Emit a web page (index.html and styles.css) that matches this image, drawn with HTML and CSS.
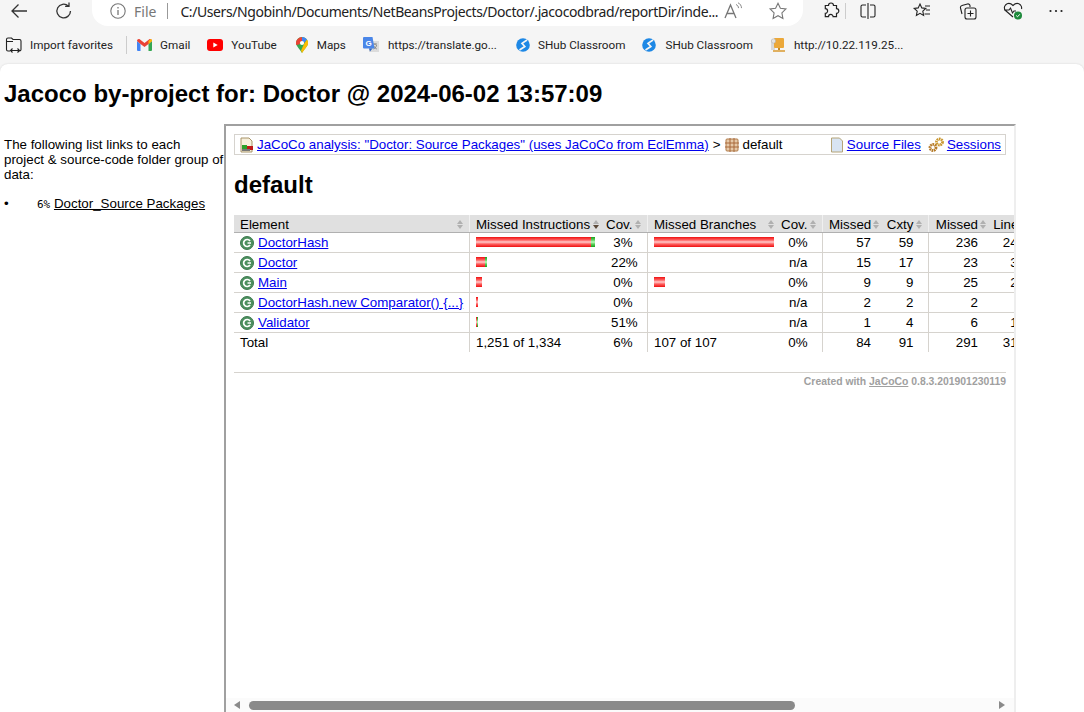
FILE: index.html
```html
<!DOCTYPE html>
<html lang="en">
<head>
    <meta charset="UTF-8">
    <title>Jacoco by-project for: Doctor</title>
    <link rel="stylesheet" href="styles.css">
</head>
<body>

<div class="toolbar">
    <svg class="tool-back" width="20" height="20" viewBox="0 0 20 20"><path d="M18 10H3M9.5 3.5 3 10l6.5 6.5" fill="none" stroke="#333" stroke-width="1.3"/></svg>
    <svg class="tool-reload" width="20" height="20" viewBox="0 0 20 20"><path d="M16.5 10a6.8 6.8 0 1 1-2.2-5M15 1.5V5.4h-3.9" fill="none" stroke="#333" stroke-width="1.3"/></svg>
    <div class="address">
        <svg width="18" height="18" viewBox="0 0 18 18"><circle cx="9" cy="9" r="7.2" fill="none" stroke="#777" stroke-width="1.1"/><path d="M9 8v5M9 5v1.4" stroke="#777" stroke-width="1.3"/></svg>
        <span class="addr-file">File</span>
        <span class="addr-sep"></span>
        <span class="addr-url">C:/Users/Ngobinh/Documents/NetBeansProjects/Doctor/.jacocodbrad/reportDir/inde...</span>
        <svg class="addr-read" width="20" height="20" viewBox="0 0 20 20"><path d="M2 17 7.5 4 13 17M4 12.5h7" fill="none" stroke="#777" stroke-width="1.3"/><path d="M13 3.5c1.5.6 2.5 2 2.5 3.6M15 1.8c2.2.9 3.5 3 3.5 5.3" fill="none" stroke="#888"/></svg>
        <svg class="addr-star" width="20" height="20" viewBox="0 0 20 20"><path d="m10 2.2 2.4 5.1 5.5.7-4 3.9 1 5.500-4.900-2.700-4.900 2.700 1-5.500-4-3.900 5.500-.7z" fill="none" stroke="#777" stroke-width="1.1"/></svg>
    </div>
    <div class="tool-right">
        <svg width="18" height="18" viewBox="0 0 18 18"><path d="M6.500 3.500a2.500 2.500 0 0 1 5 0h3v3.200a2.300 2.300 0 0 1 0 4.600v3.400h-3.400a2.300 2.300 0 0 0-4.600 0H3.300v-3.400a2.300 2.300 0 0 0 0-4.600V3.500z" fill="none" stroke="#222" stroke-width="1.2"/></svg>
        <span class="tool-sep"></span>
        <svg class="tool-split" width="18" height="18" viewBox="0 0 18 18"><path d="M7 3H3.500A1.500 1.500 0 0 0 2 4.500v9A1.500 1.500 0 0 0 3.500 15H7M11 3h3.500A1.500 1.500 0 0 1 16 4.500v9a1.500 1.500 0 0 1-1.500 1.500H11M9 1v16" fill="none" stroke="#222" stroke-width="1.1"/></svg>
        <svg class="tool-fav" width="20" height="20" viewBox="0 0 20 20"><path d="m8 3 1.800 3.900 4 .5-3 2.800.8 4.200L8 12.300l-3.600 2.100.8-4.200-3-2.800 4-.5zM13 5h5M14 9h4M12.500 13H18" fill="none" stroke="#222" stroke-width="1.1"/></svg>
        <svg class="tool-coll" width="20" height="20" viewBox="0 0 20 20"><path d="M4 13 2.500 7A2 2 0 0 1 4 4.500L9.500 3a2 2 0 0 1 2.500 1.500V6" fill="none" stroke="#222" stroke-width="1.1"/><rect x="7" y="7" width="11" height="11" rx="2" fill="none" stroke="#222" stroke-width="1.1"/><path d="M12.500 9.500v6M9.500 12.500h6" stroke="#222" stroke-width="1.1"/></svg>
        <svg class="tool-heart" width="22" height="20" viewBox="0 0 22 20"><path d="M11 16 3.500 9.500a4.300 4.300 0 0 1 0-5.500c2-2 5-2 7.500.5 2.500-2.500 5.500-2.500 7.500-.5a4.300 4.300 0 0 1 1 4M2 9h5l1.500-2 2 5 1.500-2h2" fill="none" stroke="#222" stroke-width="1.1"/><circle cx="16" cy="14.500" r="4" fill="#1e8a3c"/><path d="m14.200 14.500 1.300 1.300 2.300-2.500" fill="none" stroke="#fff"/></svg>
        <svg class="tool-dots" width="18" height="18" viewBox="0 0 18 18"><circle cx="3.500" cy="9" r="1.100" fill="#222"/><circle cx="9" cy="9" r="1.100" fill="#222"/><circle cx="14.500" cy="9" r="1.100" fill="#222"/></svg>
    </div>
</div>

<div class="bookmarks">
    <div class="bm bm-import">
        <svg width="18" height="18" viewBox="0 0 18 18"><path d="M5 15H3a1.500 1.500 0 0 1-1.500-1.500v-10A1.500 1.500 0 0 1 3 2h3.500L8 3.500h6.500A1.500 1.500 0 0 1 16 5v8.500a1.500 1.500 0 0 1-1.500 1.500M1.500 5.500H8M6 14.500h8M7.500 12.500l-2 2 2 2M12.500 12.500l2 2-2 2" fill="none" stroke="#222" stroke-width="1.1"/></svg>
        <span>Import favorites</span>
    </div>
    <span class="bm-sep"></span>
    <div class="bm">
        <svg width="15" height="12" viewBox="0 0 15 12"><path d="M0 2v9a1 1 0 0 0 1 1h2.500V5z" fill="#4285f4"/><path d="M15 2v9a1 1 0 0 1-1 1h-2.500V5z" fill="#34a853"/><path d="M0 2c0-1.800 1.800-2.500 3-1.500L7.500 4 12 .5c1.200-1 3-.3 3 1.500l-3.500 3-4 3-4-3z" fill="#ea4335"/><path d="M11.500 5 15 2c0-1-.5-1.600-1.200-1.900L11.500 2z" fill="#fbbc04"/></svg>
        <span>Gmail</span>
    </div>
    <div class="bm bm-wide">
        <svg width="16" height="12" viewBox="0 0 16 12"><rect width="16" height="12" rx="3" fill="#f00"/><path d="m6.300 3.500 4.400 2.500-4.400 2.500z" fill="#fff"/></svg>
        <span>YouTube</span>
    </div>
    <div class="bm bm-loose">
        <svg width="12" height="16" viewBox="0 0 12 16"><path d="M6 0a6 6 0 0 1 6 6c0 3-3.500 5.500-6 10C3.500 11.500 0 9 0 6a6 6 0 0 1 6-6z" fill="#34a853"/><path d="M1 2.800A6 6 0 0 1 6 0v4L3 7.500.3 8A6 6 0 0 1 1 2.800z" fill="#ea4335"/><path d="M6 0a6 6 0 0 1 5 2.600L8 6 6 4z" fill="#4285f4"/><path d="M11 2.600A6 6 0 0 1 11.500 8.500L6 16l-1-2.500L8.500 6z" fill="#fbbc04"/><circle cx="6" cy="6" r="2.100" fill="#fff"/></svg>
        <span>Maps</span>
    </div>
    <div class="bm bm-wide bm-loose">
        <svg width="16" height="16" viewBox="0 0 16 16"><rect x="6" y="4" width="10" height="11" fill="#dcdcdc"/><path d="M10 7h4M12 6.500V8M10.500 12c2-1 3-2.500 3-4M10.800 9c.6 1.400 1.600 2.400 3 3" fill="none" stroke="#777" stroke-width=".8"/><path d="M1 0h8.500l2 11.500H1a1 1 0 0 1-1-1V1a1 1 0 0 1 1-1z" fill="#4a86e8"/><text x="2.500" y="9" class="bm-g">G</text><path d="m6 11.500 1 3 2.500-3z" fill="#3367c0"/></svg>
        <span>https://translate.go...</span>
    </div>
    <div class="bm">
        <svg width="14" height="16" viewBox="0 0 14 16"><circle cx="7" cy="8" r="6.800" fill="#1e88e5"/><path d="M11 3 6 6.300 8.800 9.500 3.500 13" fill="none" stroke="#f5f5f5" stroke-width="1.7"/></svg>
        <span>SHub Classroom</span>
    </div>
    <div class="bm bm-loose">
        <svg width="14" height="16" viewBox="0 0 14 16"><circle cx="7" cy="8" r="6.800" fill="#1e88e5"/><path d="M11 3 6 6.300 8.800 9.500 3.500 13" fill="none" stroke="#f5f5f5" stroke-width="1.7"/></svg>
        <span>SHub Classroom</span>
    </div>
    <div class="bm">
        <svg width="16" height="16" viewBox="0 0 16 16"><rect x="1" y="3" width="4" height="10" fill="#d8d8d8"/><rect x="4" y="1" width="10" height="10" rx="1" fill="#eba83a"/><circle cx="3.500" cy="4" r="2.200" fill="#e4e4e4" stroke="#aaa" stroke-width=".5"/><rect x="8" y="11" width="2" height="2" fill="#c48a2a"/><rect x="3" y="13" width="12" height="2" fill="#e0b060"/></svg>
        <span>http://10.22.119.25...</span>
    </div>
</div>

<div class="page">
    <h1 class="page-title">Jacoco by-project for: Doctor @ 2024-06-02 13:57:09</h1>
    <div class="page-body">
        <div class="sidebar">
            <p>The following list links to each project &amp; source-code folder group of data:</p>
            <ul>
                <li><span class="pct">6%</span> <a href="#">Doctor_Source Packages</a></li>
            </ul>
        </div>

        <div class="frame">
            <div class="breadcrumb">
                <span class="crumb-left">
                    <svg width="16" height="16" viewBox="0 0 16 16"><path d="M2 1h8l3 3v11H2z" fill="#f6efdc" stroke="#a89468"/><rect x="3" y="8" width="5" height="4" fill="#2aa02a"/><rect x="8" y="9" width="6" height="4" fill="#c01818"/><rect x="3" y="12" width="8" height="2" fill="#777"/></svg>
                    <a href="#">JaCoCo analysis: "Doctor: Source Packages" (uses JaCoCo from EclEmma)</a>
                    <span class="crumb-gt">&gt;</span>
                    <svg width="16" height="16" viewBox="0 0 16 16"><rect x="2" y="2" width="12" height="12" rx="1" fill="#e6c9a8" stroke="#b07a48"/><path d="M6 1v14M10 1v14M1 6h14M1 10h14" stroke="#a8683a"/></svg>
                    <span class="crumb-name">default</span>
                </span>
                <span class="crumb-right">
                    <svg width="16" height="16" viewBox="0 0 16 16"><path d="M2.500 1h8l3 3v11h-11z" fill="#d8e4f2" stroke="#b5a478"/></svg>
                    <a href="#">Source Files</a>
                    <svg class="crumb-gears" width="18" height="16" viewBox="0 0 18 16"><circle cx="6" cy="10.500" r="3" fill="none" stroke="#b47a28" stroke-width="2.800" stroke-dasharray="1.600 .6"/><circle cx="12.500" cy="5" r="3" fill="none" stroke="#c9962e" stroke-width="2.800" stroke-dasharray="1.600 .6"/></svg>
                    <a href="#">Sessions</a>
                </span>
            </div>

            <h1 class="pkg-title">default</h1>

            <table class="coverage">
                <colgroup>
                    <col class="c-el"><col class="c-bar1"><col class="c-cov1"><col class="c-bar2"><col class="c-cov2">
                    <col class="c-m1"><col class="c-cx"><col class="c-m2"><col class="c-li">
                </colgroup>
                <thead>
                    <tr>
                        <td class="sort">Element</td>
                        <td class="sort down left-line">Missed Instructions</td>
                        <td class="sort num tight">Cov.</td>
                        <td class="sort left-line">Missed Branches</td>
                        <td class="sort num tight">Cov.</td>
                        <td class="sort num tight left-line">Missed</td>
                        <td class="sort num tight">Cxty</td>
                        <td class="sort num tight left-line">Missed</td>
                        <td class="sort num tight">Lines</td>
                    </tr>
                </thead>
                <tbody>
                    <tr>
                        <td><svg class="cls" width="14" height="14" viewBox="0 0 14 14"><circle cx="7" cy="7" r="6.500" fill="#4c8f5e" stroke="#3f7a50"/><path d="M10 5a3.500 3.500 0 1 0 0 4M7.500 7H11" fill="none" stroke="#fff" stroke-width="1.700"/></svg><a href="#">DoctorHash</a></td>
                        <td class="left-line"><span class="bar red" style="width:115px"></span><span class="bar green" style="width:4px"></span></td>
                        <td class="num">3%</td>
                        <td class="left-line"><span class="bar red" style="width:120px"></span></td>
                        <td class="num">0%</td>
                        <td class="num left-line">57</td><td class="num">59</td>
                        <td class="num left-line">236</td><td class="num">244</td>
                    </tr>
                    <tr>
                        <td><svg class="cls" width="14" height="14" viewBox="0 0 14 14"><circle cx="7" cy="7" r="6.500" fill="#4c8f5e" stroke="#3f7a50"/><path d="M10 5a3.500 3.500 0 1 0 0 4M7.500 7H11" fill="none" stroke="#fff" stroke-width="1.700"/></svg><a href="#">Doctor</a></td>
                        <td class="left-line"><span class="bar red" style="width:9px"></span><span class="bar green" style="width:2px"></span></td>
                        <td class="num">22%</td>
                        <td class="left-line"></td>
                        <td class="num">n/a</td>
                        <td class="num left-line">15</td><td class="num">17</td>
                        <td class="num left-line">23</td><td class="num">36</td>
                    </tr>
                    <tr>
                        <td><svg class="cls" width="14" height="14" viewBox="0 0 14 14"><circle cx="7" cy="7" r="6.500" fill="#4c8f5e" stroke="#3f7a50"/><path d="M10 5a3.500 3.500 0 1 0 0 4M7.500 7H11" fill="none" stroke="#fff" stroke-width="1.700"/></svg><a href="#">Main</a></td>
                        <td class="left-line"><span class="bar red" style="width:6px"></span></td>
                        <td class="num">0%</td>
                        <td class="left-line"><span class="bar red" style="width:11px"></span></td>
                        <td class="num">0%</td>
                        <td class="num left-line">9</td><td class="num">9</td>
                        <td class="num left-line">25</td><td class="num">25</td>
                    </tr>
                    <tr>
                        <td><svg class="cls" width="14" height="14" viewBox="0 0 14 14"><circle cx="7" cy="7" r="6.500" fill="#4c8f5e" stroke="#3f7a50"/><path d="M10 5a3.500 3.500 0 1 0 0 4M7.500 7H11" fill="none" stroke="#fff" stroke-width="1.700"/></svg><a href="#">DoctorHash.new Comparator() {...}</a></td>
                        <td class="left-line"><span class="bar red" style="width:2px"></span></td>
                        <td class="num">0%</td>
                        <td class="left-line"></td>
                        <td class="num">n/a</td>
                        <td class="num left-line">2</td><td class="num">2</td>
                        <td class="num left-line">2</td><td class="num">2</td>
                    </tr>
                    <tr>
                        <td><svg class="cls" width="14" height="14" viewBox="0 0 14 14"><circle cx="7" cy="7" r="6.500" fill="#4c8f5e" stroke="#3f7a50"/><path d="M10 5a3.500 3.500 0 1 0 0 4M7.500 7H11" fill="none" stroke="#fff" stroke-width="1.700"/></svg><a href="#">Validator</a></td>
                        <td class="left-line"><span class="bar red" style="width:1px"></span><span class="bar green" style="width:1px"></span></td>
                        <td class="num">51%</td>
                        <td class="left-line"></td>
                        <td class="num">n/a</td>
                        <td class="num left-line">1</td><td class="num">4</td>
                        <td class="num left-line">6</td><td class="num">12</td>
                    </tr>
                </tbody>
                <tfoot>
                    <tr>
                        <td>Total</td>
                        <td class="left-line">1,251 of 1,334</td>
                        <td class="num">6%</td>
                        <td class="left-line">107 of 107</td>
                        <td class="num">0%</td>
                        <td class="num left-line">84</td><td class="num">91</td>
                        <td class="num left-line">291</td><td class="num">319</td>
                    </tr>
                </tfoot>
            </table>

            <div class="footer">Created with <a href="#">JaCoCo</a> 0.8.3.201901230119</div>

            <div class="hscroll">
                <span class="arrow-l"></span>
                <span class="thumb"></span>
                <span class="arrow-r"></span>
            </div>
        </div>
    </div>
</div>

</body>
</html>
```

FILE: styles.css
```css
html, body {
    margin: 0;
    height: 712px;
    overflow: hidden;
}
body {
    font-family: "Liberation Sans", Arial, sans-serif;
    font-size: 13.33px;
    line-height: 15px;
    background-color: #f5f5f5;
    display: flex;
    flex-direction: column;
}
svg {
    flex: none;
}

/* browser toolbar */
.toolbar {
    height: 30px;
    display: flex;
    align-items: center;
}
.tool-back {
    margin-left: 9px;
    margin-top: -8px;
}
.tool-reload {
    margin-left: 25px;
    margin-top: -8px;
}
.address {
    margin-left: 18px;
    width: 711px;
    height: 32px;
    margin-top: -10px;
    padding: 2px 0 0 17px;
    box-sizing: border-box;
    background: #fff;
    border-radius: 0 0 16px 16px;
    display: flex;
    align-items: center;
    font-family: "Noto Sans", sans-serif;
    font-size: 14px;
}
.addr-file {
    margin-left: 7px;
    color: #777;
}
.addr-sep {
    width: 1px;
    height: 16px;
    background: #999;
    margin: 0 12px 0 11px;
}
.addr-url {
    color: #222;
    white-space: nowrap;
    letter-spacing: -0.41px;
    width: 540px;
}
.addr-read {
    margin-left: 3px;
}
.addr-star {
    margin-left: 25px;
}
.tool-right {
    display: flex;
    align-items: center;
    margin-left: 19px;
    margin-top: -8px;
}
.tool-sep {
    width: 1px;
    height: 16px;
    background: #ccc;
    margin: 0 13px 0 5px;
}
.tool-fav {
    margin-left: 35px;
}
.tool-coll {
    margin-left: 26px;
}
.tool-heart {
    margin-left: 24px;
}
.tool-dots {
    margin-left: 23px;
}

/* favorites bar */
.bookmarks {
    height: 30px;
    margin-bottom: 4px;
    display: flex;
    align-items: center;
    padding-left: 5px;
    font-family: Roboto, sans-serif;
    font-size: 11.7px;
    color: #222;
}
.bm {
    display: flex;
    align-items: center;
    gap: 8px;
    white-space: nowrap;
    margin-right: 17px;
}
.bm-import {
    gap: 7px;
}
.bm-wide {
    margin-right: 19px;
}
.bm-loose {
    gap: 9px;
}
.bm-g {
    font-family: "Liberation Sans", sans-serif;
    font-size: 8px;
    font-weight: bold;
    fill: #fff;
}
.bm-sep {
    width: 1px;
    height: 18px;
    background: #ccc;
    margin: 0 10px 0 -4px;
}

/* page area */
.page {
    flex: 1;
    min-height: 0;
    background: #fff;
    border-radius: 8px 8px 0 0;
    box-shadow: 0 0 2px rgba(0, 0, 0, 0.15);
    display: flex;
    flex-direction: column;
    color: #000;
}
.page-title {
    font-size: 24px;
    line-height: 27px;
    font-weight: bold;
    margin: 16px 0 17px 4px;
}
.page-body {
    flex: 1;
    min-height: 0;
    display: flex;
}
.sidebar {
    width: 220px;
    margin-left: 4px;
    padding-top: 13px;
}
.sidebar p {
    margin: 0;
}
.sidebar ul {
    margin: 14px 0 0;
    padding: 0;
    list-style: none;
}
.sidebar li::before {
    content: "\2022";
    display: inline-block;
    width: 33px;
}
.sidebar a {
    color: #000;
}
.pct {
    font-family: "DejaVu Sans Mono", monospace;
    font-size: 11px;
}

/* report frame */
.frame {
    position: relative;
    width: 772px;
    margin-bottom: -2px;
    border-style: solid;
    border-width: 2px;
    border-color: #a0a0a0 #eee #eee #a0a0a0;
    padding: 8px 8px 0;
    overflow: hidden;
    background: #fff;
}
.breadcrumb {
    border: 1px solid #d6d3ce;
    padding: 2px 4px;
    display: flex;
    justify-content: space-between;
}
.crumb-left, .crumb-right {
    display: flex;
    align-items: center;
    white-space: nowrap;
}
.crumb-left svg, .crumb-right svg {
    margin: -1px 0;
}
.crumb-left a {
    margin-left: 2px;
}
.crumb-gt {
    margin: 0 4px;
}
.crumb-name {
    margin-left: 2px;
}
.crumb-right a {
    margin-left: 2px;
}
.crumb-right .crumb-gears {
    margin-left: 6px;
}
.pkg-title {
    font-size: 24px;
    line-height: 27px;
    font-weight: bold;
    margin: 16px 0 17px;
}

/* coverage table */
.coverage {
    border-collapse: collapse;
    border-spacing: 0;
    table-layout: fixed;
    width: 805px;
}
.c-el { width: 235px; }
.c-bar1 { width: 136px; }
.c-cov1 { width: 42px; }
.c-bar2 { width: 133px; }
.c-cov2 { width: 42px; }
.c-m1 { width: 63px; }
.c-cx { width: 43px; }
.c-m2 { width: 64px; }
.c-li { width: 47px; }
.coverage td {
    padding: 2px 6px;
    white-space: nowrap;
    overflow: hidden;
    color: #000;
}
.coverage thead td {
    position: relative;
    padding: 2px 14px 0 6px;
    background: #e0e0e0;
    border-bottom: 1px solid #b0b0b0;
}
.coverage tbody td {
    border-bottom: 1px solid #d6d3ce;
}
.coverage .num {
    text-align: right;
    padding-right: 14px;
}
.coverage .tight {
    padding-left: 0;
}
.coverage .left-line {
    border-left: 1px solid #d6d3ce;
}
.coverage thead .left-line {
    border-left-color: #f0f0f0;
    padding-left: 6.5px;
}
.coverage tfoot .left-line {
    padding-left: 6.5px;
}
.cls {
    vertical-align: top;
    margin: 1px 4px 0 0;
}
.sort::before, .sort::after {
    content: "";
    position: absolute;
    right: 6px;
    border-left: 3.5px solid transparent;
    border-right: 3.5px solid transparent;
}
.sort::before {
    top: 5px;
    border-bottom: 4px solid #b0b0b0;
}
.sort::after {
    top: 10px;
    border-top: 4px solid #b0b0b0;
}
.sort.down::after {
    border-top-color: #5c4a3a;
}
.bar {
    display: inline-block;
    height: 10px;
    vertical-align: top;
    margin-top: 2px;
}
.red {
    background: linear-gradient(#ee1010, #ff6060 30%, #fcc 50%, #ff6060 70%, #ee1010);
}
.green {
    background: linear-gradient(#18a018, #60d060 30%, #bfb 50%, #60d060 70%, #18a018);
}

/* footer + scrollbar */
.footer {
    margin-top: 20px;
    border-top: 1px solid #d6d3ce;
    padding-top: 3px;
    font-size: 10.4px;
    line-height: 12px;
    font-weight: bold;
    color: #a0a0a0;
    text-align: right;
}
.footer a {
    color: #a0a0a0;
}
.hscroll {
    position: absolute;
    left: 0;
    right: 0;
    bottom: 0;
    height: 14px;
    background: #fbfbfb;
}
.thumb {
    position: absolute;
    left: 23px;
    top: 3px;
    width: 546px;
    height: 9px;
    border-radius: 5px;
    background: #8a8a8a;
}
.arrow-l, .arrow-r {
    position: absolute;
    top: 3px;
    border-top: 4.5px solid transparent;
    border-bottom: 4.5px solid transparent;
}
.arrow-l {
    left: 8px;
    border-right: 6px solid #8a8a8a;
}
.arrow-r {
    left: 773px;
    border-left: 6px solid #8a8a8a;
}
```
